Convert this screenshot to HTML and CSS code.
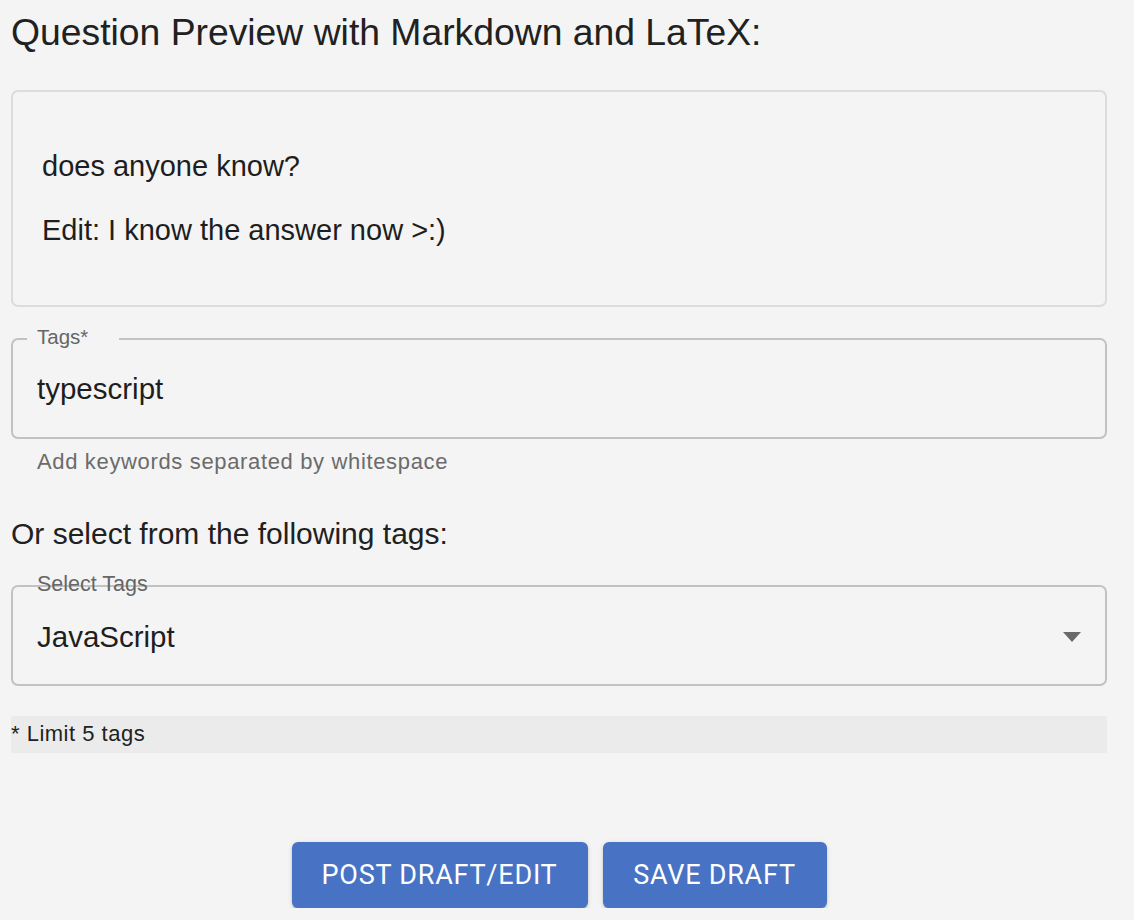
FILE: index.html
```html
<!DOCTYPE html>
<html lang="en">
<head>
<meta charset="utf-8">
<title>Question Preview</title>
<link rel="stylesheet" href="styles.css">
</head>
<body>
<div class="page">
  <h1 class="title">Question Preview with Markdown and LaTeX:</h1>

  <div class="preview">
    <p>does anyone know?</p>
    <p>Edit: I know the answer now &gt;:)</p>
  </div>

  <div class="field field-tags">
    <span class="field-label notched">Tags*</span>
    <span class="field-value">typescript</span>
  </div>
  <div class="helper">Add keywords separated by whitespace</div>

  <h2 class="subtitle">Or select from the following tags:</h2>

  <div class="field field-select">
    <span class="field-label">Select Tags</span>
    <span class="field-value">JavaScript</span>
    <svg class="caret" width="18" height="10" viewBox="0 0 18 10"><path d="M0 0 L18 0 L9 10 Z" fill="#6a6a6a"/></svg>
  </div>

  <div class="limit">* Limit 5 tags</div>

  <div class="actions">
    <button class="btn btn-post">POST DRAFT/EDIT</button>
    <button class="btn btn-save">SAVE DRAFT</button>
  </div>
</div>
</body>
</html>
```

FILE: styles.css
```css
html, body {
  margin: 0;
  padding: 0;
  background: #f4f4f4;
}
body {
  font-family: "Liberation Sans", Arial, sans-serif;
  color: #212121;
}
.page {
  width: 1096px;
  padding: 0 27px 0 11px;
  display: flex;
  flex-direction: column;
}
.title {
  margin: 10px 0 0 0;
  font-size: 37.3px;
  line-height: 44px;
  font-weight: 400;
  color: #212121;
}
.preview {
  margin-top: 36px;
  border: 2px solid #dcdcdc;
  border-radius: 7px;
  padding: 57px 29px 28px 29px;
  height: 217px;
  box-sizing: border-box;
}
.preview p {
  margin: 29px 0;
  font-size: 29px;
  line-height: 35px;
  color: #1e1e1e;
}
.preview p:first-child { margin-top: 0; }
.preview p:last-child { margin-bottom: 0; }

.field {
  position: relative;
  border: 2px solid #c2c2c2;
  border-radius: 7px;
  height: 101px;
  box-sizing: border-box;
  display: flex;
  align-items: center;
  padding: 0 24px;
}
.field-tags { margin-top: 31px; }
.field-select { margin-top: 33px; }
.field-label {
  position: absolute;
  top: -15px;
  left: 24px;
  font-size: 20.5px;
  line-height: 24px;
  color: #666666;
}
.field-label.notched {
  left: 14px;
  padding: 0 31px 0 10px;
  background: #f4f4f4;
}
.field-select .field-label {
  font-size: 21.5px;
  top: -15.5px;
}
.field-value {
  font-size: 29.5px;
  line-height: 36px;
  color: #1e1e1e;
  margin-top: 1px;
}
.field-select .field-value { margin-top: 3px; }
.caret {
  margin-left: auto;
  margin-right: 0;
  margin-top: 2px;
}
.helper {
  margin-top: 10px;
  padding-left: 26px;
  font-size: 22px;
  line-height: 26px;
  letter-spacing: 0.65px;
  color: #6b6b6b;
}
.subtitle {
  margin: 41px 0 0 0;
  font-size: 30px;
  line-height: 36px;
  font-weight: 400;
  color: #212121;
}
.limit {
  margin-top: 30px;
  height: 37px;
  background: #ebebeb;
  font-size: 22px;
  line-height: 36px;
  letter-spacing: 0.5px;
  color: #222222;
}
.actions {
  margin-top: 89px;
  display: flex;
  justify-content: center;
  gap: 15px;
}
.btn {
  height: 66px;
  border: none;
  border-radius: 6px;
  background: #4873c5;
  color: #ffffff;
  font-family: Roboto, "Liberation Sans", sans-serif;
  font-weight: 400;
  font-size: 27px;
  letter-spacing: 0.77px;
  white-space: nowrap;
  padding: 0;
  box-shadow: 0 3px 1px -2px rgba(0,0,0,0.2), 0 2px 2px 0 rgba(0,0,0,0.14), 0 1px 5px 0 rgba(0,0,0,0.12);
  cursor: pointer;
}
.btn-post { width: 296px; }
.btn-save { width: 224px; }
```
